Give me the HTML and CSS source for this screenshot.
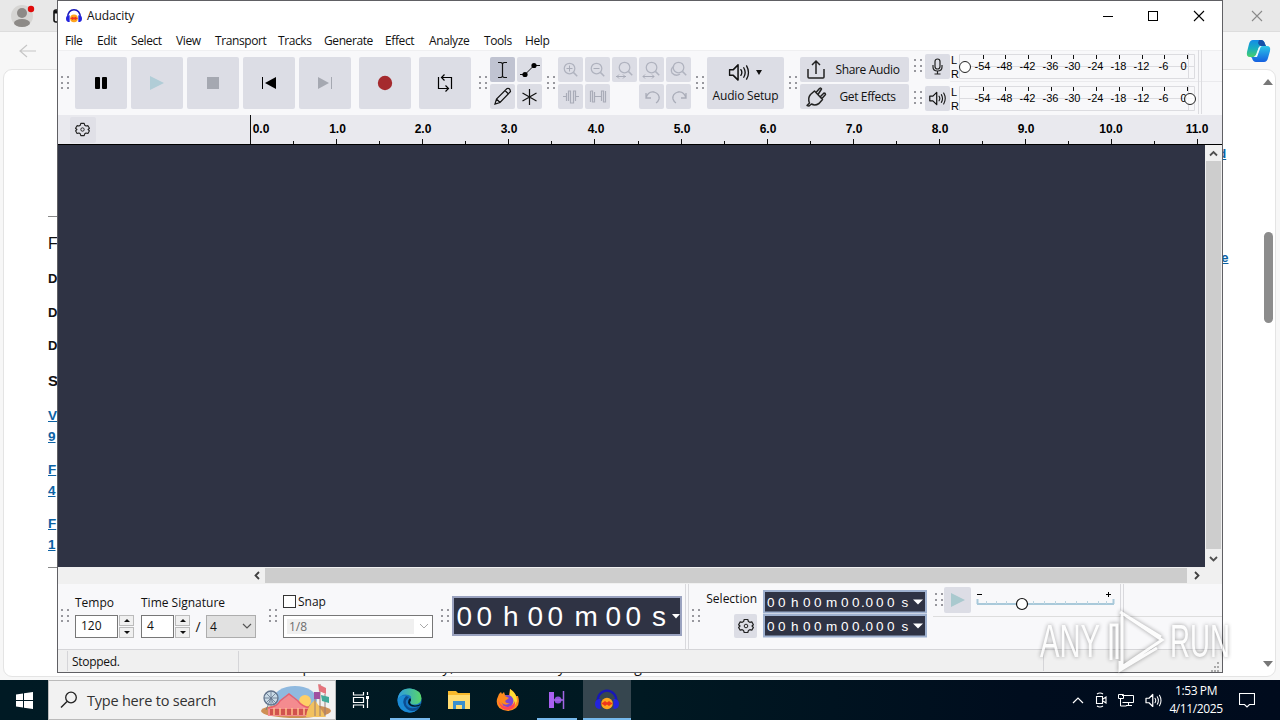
FILE: index.html
```html
<!DOCTYPE html>
<html lang="en">
<head>
<meta charset="utf-8">
<title>Audacity</title>
<link rel="stylesheet" href="styles.css">
</head>
<body>
<svg class="defs" width="0" height="0">
  <defs>
    <symbol id="grip" viewBox="0 0 8 14"><path d="M0 1h2M6 1h2M0 7h2M6 7h2M0 12h2M6 12h2" stroke="#98989e" stroke-width="2"/></symbol>
    <symbol id="gear" viewBox="0 0 16 16"><path d="M6.200 1.500h3.600l.6 2 1.400.8 2-.4 1.600 2.800L14 8l1.400 1.400-1.600 2.800-2-.5-1.400.9-.6 1.900H6.200l-.6-1.900-1.400-.9-2 .5L.6 9.400 2 8 .6 6.700l1.600-2.800 2 .4 1.400-.8z" fill="none" stroke="#222" stroke-width="1.200" stroke-linejoin="round"/><circle cx="8" cy="8" r="1.800" fill="none" stroke="#222"/></symbol>
    <symbol id="speaker" viewBox="0 0 22 20"><path d="M1 7h4l5-5v16l-5-5H1z" fill="none" stroke="currentColor" stroke-width="1.600" stroke-linejoin="round"/><path d="M13 7q2 3 0 6M16 5q3 5 0 10M19 3q4 7 0 14" fill="none" stroke="currentColor" stroke-width="1.400" stroke-linecap="round"/></symbol>
    <symbol id="aud" viewBox="0 0 24 22"><circle cx="12" cy="14.500" r="5.800" fill="#ffa51e"/><path d="M6 14.500l2-1 2-1.500 2 1.500 2-1.500 2 1.500 2 1-2 1-2 1.500-2-1.500-2 1.500-2-1.500z" fill="#f0351c"/><path d="M2.500 14C1.500-2.500 22.500-2.500 21.500 14" fill="none" stroke="#1717b8" stroke-width="2.400"/><path d="M5.500 10v10q-5.500 0-5.500-5t5.500-5M18.500 10v10q5.500 0 5.500-5t-5.500-5" fill="#2424dd"/></symbol>
    <symbol id="lens" viewBox="0 0 26 26"><circle cx="12" cy="12" r="5.500" fill="none" stroke="#b0b3bf" stroke-width="1.300"/><path d="M16 16l4 4" stroke="#b0b3bf" stroke-width="1.500"/></symbol>
  </defs>
</svg>

<div class="desktop">
<section class="browser">
  <div class="tabs">
    <svg class="avatar" width="34" height="30" viewBox="0 0 34 30"><circle cx="12" cy="15" r="11" fill="#d6d5d3"/><circle cx="12" cy="12" r="5" fill="#8d8a87"/><ellipse cx="12" cy="22" rx="8" ry="4" fill="#8d8a87"/><circle cx="21" cy="8" r="3.200" fill="#e00b0b"/></svg>
    <svg class="tabicon" width="16" height="14" viewBox="0 0 16 14"><rect x="1" y="1" width="14" height="12" rx="2" fill="none" stroke="#111" stroke-width="1.600"/><path d="M1 3h14" stroke="#111" stroke-width="3"/></svg>
    <svg class="bclose" width="12" height="12" viewBox="0 0 12 12"><path d="M1 1l10 10M11 1L1 11" stroke="#8a8a8a" stroke-width="1.100"/></svg>
  </div>
  <div class="nav">
    <svg width="18" height="14" viewBox="0 0 18 14"><path d="M8 1L1 7l7 6M1 7h16" fill="none" stroke="#c6c6c6" stroke-width="1.200"/></svg>
    <svg width="25" height="24" viewBox="0 0 25 24"><defs><linearGradient id="cpa" x1="0" y1="0" x2="0" y2="1"><stop offset="0" stop-color="#138be8"/><stop offset=".5" stop-color="#18aebf"/><stop offset="1" stop-color="#49d06a"/></linearGradient><linearGradient id="cpb" x1="0" y1="0" x2="0" y2="1"><stop offset="0" stop-color="#2bc6e8"/><stop offset="1" stop-color="#145fe0"/></linearGradient></defs><path d="M7 1h8q3 0 4 4l1 2h-5q-2 0-3 4l-1 4q-1 3-4 3H4q-4 0-3-5l2-8q1-4 4-4z" fill="url(#cpa)"/><path d="M13 1h2q3 0 4 4l1 2h-5q-2 0-3-3z" fill="#154fa8"/><path d="M18 23h-8q-3 0-4-4l-1-1h4q2 0 3-4l1-4q1-3 4-3h4q4 0 3 5l-2 7q-1 4-4 4z" fill="url(#cpb)"/><path d="M13 8l2-1-4 11-3 0q2-1 3-5z" fill="#e9fbff"/></svg>
  </div>
  <div class="page">
    <div class="left">
      <hr>
      <p class="h t1">F</p><p class="b t2">D</p><p class="b t3">D</p><p class="b t4">D</p><p class="h sb t5">S</p>
      <a class="t6">V</a><a class="t9">9</a><a class="t8">F</a><a class="t9">4</a><a class="t8">F</a><a class="t7">1</a>
      <hr class="hr2">
    </div>
    <div class="right"><a>d</a><a class="e">e</a></div>
    <div class="pscroll"><i class="up"></i><i class="thumb"></i><i class="down"></i></div>
  </div>
  <div class="cut">Other updates automatically, introduced any increasing and</div>
</section>

<main class="win">
  <header class="title">
    <svg width="16" height="16"><use href="#aud"/></svg><span>Audacity</span>
    <svg class="wc" width="102" height="12" viewBox="0 0 102 12"><path d="M0 6.500h10" stroke="#000"/><rect x="45.500" y="1.500" width="9" height="9" fill="none" stroke="#000"/><path d="M91 1l10 10M101 1L91 11" stroke="#000" stroke-width="1.100"/></svg>
  </header>
  <nav class="menu"><span style="width:18px">File</span><span style="width:20px">Edit</span><span style="width:31px">Select</span><span style="width:25px">View</span><span style="width:49px">Transport</span><span style="width:32px">Tracks</span><span style="width:47px">Generate</span><span style="width:30px">Effect</span><span style="width:41px">Analyze</span><span style="width:27px">Tools</span><span style="width:25px">Help</span></nav>

  <section class="bar">
    <svg class="grip"><use href="#grip"/></svg>
    <div class="transport">
      <button><svg viewBox="0 0 52 52"><rect x="20" y="20" width="5" height="12" rx="1"/><rect x="27" y="20" width="5" height="12" rx="1"/></svg></button>
      <button><svg viewBox="0 0 52 52"><path d="M19 19l14 7-14 7z" fill="#b1cdd7"/></svg></button>
      <button><svg viewBox="0 0 52 52"><rect x="20" y="20" width="12" height="12" fill="#a5a8b1"/></svg></button>
      <button><svg viewBox="0 0 52 52"><path d="M19.500 20v12" stroke="#000"/><path d="M33 20v12l-11-6z"/></svg></button>
      <button><svg viewBox="0 0 52 52"><path d="M32.500 20v12" stroke="#a5a8b1"/><path d="M19 20v12l11-6z" fill="#a5a8b1"/></svg></button>
      <button class="gap"><svg viewBox="0 0 52 52"><circle cx="26" cy="26" r="7.200" fill="#a52a2e"/></svg></button>
      <button class="gap"><svg viewBox="0 0 52 52"><path d="M19.500 20v11.500h9M26.500 28.500l3 3-3 3M32.500 32V20.500h-9M25.500 17.500l-3 3 3 3" fill="none" stroke="#000" stroke-width="1.200"/></svg></button>
    </div>
    <svg class="grip g2"><use href="#grip"/></svg>
    <div class="tiles two">
      <button class="on"><svg viewBox="0 0 25 25"><path d="M8 5.500h3l1.500 1 1.500-1h3M12.500 6v14M8 20.500h3l1.500-1 1.500 1h3" fill="none" stroke="#111" stroke-width="1.200"/></svg></button>
      <button><svg viewBox="0 0 25 25"><path d="M3 17.500h5l9-9h6" fill="none" stroke="#111"/><circle cx="8" cy="17.500" r="2.600"/><circle cx="17" cy="8.500" r="2.600"/></svg></button>
      <button><svg viewBox="0 0 25 25"><path d="M5 20l1.500-5L17 4.500q3-1 3.500 3L10 18.500zM15 6.500l3.500 3.500M6.500 15l3.500 3.500" fill="none" stroke="#111" stroke-width="1.200"/></svg></button>
      <button><svg viewBox="0 0 25 25"><path d="M12.500 5v16M5.500 9l14 8M19.500 9l-14 8" stroke="#111" stroke-width="1.200"/></svg></button>
    </div>
    <svg class="grip g3"><use href="#grip"/></svg>
    <div class="tiles five">
      <button><svg viewBox="0 0 25 25"><use href="#lens" width="25" height="25"/><path d="M8.500 11.500h6M11.500 8.500v6" stroke="#a9acb8"/></svg></button>
      <button><svg viewBox="0 0 25 25"><use href="#lens" width="25" height="25"/><path d="M8.500 11.500h6" stroke="#a9acb8"/></svg></button>
      <button><svg viewBox="0 0 25 25"><use href="#lens" x="1" y="-1" width="25" height="25"/><path d="M4 19.500h10M7 17.500l-2 2 2 2M11 17.500l2 2-2 2" fill="none" stroke="#a9acb8"/></svg></button>
      <button><svg viewBox="0 0 25 25"><use href="#lens" x="1" y="-1" width="25" height="25"/><path d="M4 19.500h11M6 17.500l-2 2 2 2M13 17.500l2 2-2 2" fill="none" stroke="#a9acb8"/></svg></button>
      <button><svg viewBox="0 0 25 25"><use href="#lens" x="1" y="-1" width="25" height="25"/><path d="M8 9q-4 3-2 7 4 4 8 1" fill="none" stroke="#b0b3bf" stroke-width="1.300"/></svg></button>
      <button><svg viewBox="0 0 25 25"><path d="M5 12.500h3M18 12.500h3M8.500 9v8M10.500 17V7h2v12h3V7h2v10" fill="none" stroke="#a9acb8" stroke-width="1.200"/></svg></button>
      <button><svg viewBox="0 0 25 25"><path d="M5.500 7v11M5.500 7h2v11h2V8M9.500 12.500h7M16.500 17V7h2v11h2V7" fill="none" stroke="#a9acb8" stroke-width="1.200"/></svg></button>
      <b></b>
      <button><svg viewBox="0 0 25 25"><path d="M7 9v5h5M7 14q2-7 8-6 6 2 5 7-1 3-3 4" fill="none" stroke="#a9acb8" stroke-width="1.300"/></svg></button>
      <button><svg viewBox="0 0 25 25"><path d="M20 9v5h-5M20 14q-2-7-8-6-6 2-5 7 1 3 3 4" fill="none" stroke="#a9acb8" stroke-width="1.300"/></svg></button>
    </div>
    <svg class="grip g4"><use href="#grip"/></svg>
    <button class="setup"><span class="row"><svg width="22" height="19" viewBox="0 0 22 20"><use href="#speaker"/></svg><i></i></span><span>Audio Setup</span></button>
    <svg class="grip g4"><use href="#grip"/></svg>
    <div class="share">
      <button><svg width="22" height="22" viewBox="0 0 22 22"><path d="M3 10v8q0 1 1 1h14q1 0 1-1v-8M11 15V3M7 6l4-4 4 4" fill="none" stroke="#222" stroke-width="1.500"/></svg><span>Share Audio</span></button>
      <button><svg width="22" height="22" viewBox="0 0 22 22"><path d="M2 19.500l2.500-2.500q-2-5 1-8.500l4-3.500 8 8.500-3.500 4q-4 2.500-7.500.5L4 20zM11 6.500l3.500-4q1.500-1 2 .5l-3.500 5.500M15 11l4-4q1.500 0 1.500 1.500l-4 4.500" fill="none" stroke="#222" stroke-width="1.500" stroke-linejoin="round"/></svg><span>Get Effects</span></button>
    </div>
    <div class="meters">
      <div class="meter"><svg class="grip"><use href="#grip"/></svg><button><svg viewBox="0 0 25 25"><rect x="10" y="5" width="5" height="10" rx="2.500" fill="none" stroke="#222" stroke-width="1.200"/><path d="M8 11v2q0 4 4.500 4t4.500-4v-2M12.500 17v3M9.500 20h6" fill="none" stroke="#222" stroke-width="1.200"/></svg></button>
        <svg class="scale" width="272" height="32" viewBox="0 0 272 32"><g fill="none" stroke="#dcdce0"><path d="M9.500 4.500h235v24h-235zM10 16.500h235M238.500 3v26M248.500 0v32M251.500 0v32M0 32h272"/></g><g class="ticks" stroke="#111"><path d="M33.500 5v4M55.500 5v4M78.500 5v4M101.500 5v4M123.500 5v4M146.500 5v4M169.500 5v4M192.500 5v4M214.500 5v4M237.500 5v4"/></g><g class="lab"><text x="1" y="14">L</text><text x="1" y="28">R</text><g class="n"><text x="32.500" y="20">-54</text><text x="54.500" y="20">-48</text><text x="77.500" y="20">-42</text><text x="100.500" y="20">-36</text><text x="122.500" y="20">-30</text><text x="145.500" y="20">-24</text><text x="168.500" y="20">-18</text><text x="191.500" y="20">-12</text><text x="213.500" y="20">-6</text><text x="233.500" y="20">0</text></g></g><circle cx="15" cy="17" r="5.500" fill="#fff" stroke="#222"/></svg></div>
      <div class="meter"><svg class="grip"><use href="#grip"/></svg><button><svg viewBox="0 0 25 25"><use href="#speaker" x="4" y="4" width="17" height="17"/></svg></button>
        <svg class="scale" width="272" height="32" viewBox="0 0 272 32"><g fill="none" stroke="#dcdce0"><path d="M9.500 4.500h235v24h-235zM10 16.500h235M238.500 3v26M248.500 0v32M251.500 0v32"/></g><g class="ticks" stroke="#111"><path d="M33.500 5v4M55.500 5v4M78.500 5v4M101.500 5v4M123.500 5v4M146.500 5v4M169.500 5v4M192.500 5v4M214.500 5v4M237.500 5v4"/></g><g class="lab"><text x="1" y="14">L</text><text x="1" y="28">R</text><g class="n"><text x="32.500" y="20">-54</text><text x="54.500" y="20">-48</text><text x="77.500" y="20">-42</text><text x="100.500" y="20">-36</text><text x="122.500" y="20">-30</text><text x="145.500" y="20">-24</text><text x="168.500" y="20">-18</text><text x="191.500" y="20">-12</text><text x="213.500" y="20">-6</text><text x="233.500" y="20">0</text></g></g><circle cx="240" cy="17" r="5.500" fill="#fff" fill-opacity=".8" stroke="#222"/></svg></div>
    </div>
  </section>

  <section class="ruler">
    <button><svg width="15" height="15"><use href="#gear"/></svg></button>
    <svg class="rul" width="972" height="29" viewBox="0 0 972 29"><path d="M.500 0v29M86.500 24v5M172.500 24v5M258.500 24v5M344.500 24v5M431.500 24v5M517.500 24v5M603.500 24v5M689.500 24v5M775.500 24v5M861.500 24v5M947.500 24v5M43.500 26v3M129.500 26v3M215.500 26v3M301.500 26v3M388.500 26v3M474.500 26v3M560.500 26v3M646.500 26v3M732.500 26v3M818.500 26v3M904.500 26v3" stroke="#111"/><g><text x="11" y="18">0.0</text><text x="87.500" y="18">1.0</text><text x="173" y="18">2.0</text><text x="259" y="18">3.0</text><text x="346" y="18">4.0</text><text x="432" y="18">5.0</text><text x="518" y="18">6.0</text><text x="604" y="18">7.0</text><text x="690" y="18">8.0</text><text x="776" y="18">9.0</text><text x="861" y="18">10.0</text><text x="947" y="18">11.0</text></g></svg>
  </section>

  <section class="tracks">
    <div class="canvas"></div>
    <div class="vs"><svg width="17" height="16" viewBox="0 0 17 16"><path d="M5 10.500l3.500-3.500L12 10.500" fill="none" stroke="#505050" stroke-width="1.800"/></svg><i></i><svg width="17" height="18" viewBox="0 0 17 18"><path d="M5 8l3.500 3.500L12 8" fill="none" stroke="#505050" stroke-width="1.800"/></svg></div>
  </section>
  <div class="hs"><svg width="16" height="17" viewBox="0 0 16 17"><path d="M10 5L6.500 8.500 10 12" fill="none" stroke="#404040" stroke-width="1.800"/></svg><i></i><svg width="18" height="17" viewBox="0 0 18 17"><path d="M8 5l3.500 3.500L8 12" fill="none" stroke="#404040" stroke-width="1.800"/></svg></div>

  <section class="lower">
    <svg class="grip"><use href="#grip"/></svg>
    <div class="sig">
      <div class="names"><span>Tempo</span><span>Time Signature</span></div>
      <div class="row"><span class="box b1">120</span><span class="spin"><i></i><i></i></span><span class="box b2">4</span><span class="spin"><i></i><i></i></span><em>/</em><span class="sel">4<svg width="10" height="7" viewBox="0 0 10 7"><path d="M1 1l4 4 4-4" fill="none" stroke="#555" stroke-width="1.200"/></svg></span></div>
    </div>
    <svg class="grip gs"><use href="#grip"/></svg>
    <div class="snap"><label><i></i>Snap</label><div class="combo"><span>1/8</span><svg width="10" height="7" viewBox="0 0 10 7"><path d="M1 1l4 4 4-4" fill="none" stroke="#aaa"/></svg></div></div>
    <svg class="grip gt"><use href="#grip"/></svg>
    <svg class="time" width="230" height="40" viewBox="0 0 230 40"><rect x="1" y="1" width="228" height="38" fill="#2f3344" stroke="#9aa2bf" stroke-width="2"/><text y="30" x="4.500 24.500 38 51 70 75.500 95.500 109 122.500 143 153.500 173.500 185 200">00 h 00 m 00 s</text><path d="M220 18h8l-4 4.500z" fill="#fff"/></svg>
    <div class="sep"></div>
    <svg class="grip gsel"><use href="#grip"/></svg>
    <div class="selname"><span>Selection</span><button><svg width="16" height="16"><use href="#gear"/></svg></button></div>
    <div class="fields">
      <svg width="164" height="24" viewBox="0 0 164 24"><rect x="1" y="1" width="162" height="21.500" fill="#2f3344" stroke="#9fb1cf" stroke-width="2"/><text y="17" x="4 15 23 28 35 40 51 59 63 73 78 89 98 102.500 113 124 133 138.500">00 h 00 m 00.000 s</text><path d="M150 9.500h10l-5 5z" fill="#fff"/></svg>
      <svg width="164" height="24" viewBox="0 0 164 24"><rect x="1" y="1" width="162" height="21.500" fill="#2f3344" stroke="#9fb1cf" stroke-width="2"/><text y="17" x="4 15 23 28 35 40 51 59 63 73 78 89 98 102.500 113 124 133 138.500">00 h 00 m 00.000 s</text><path d="M150 9.500h10l-5 5z" fill="#fff"/></svg>
    </div>
    <div class="pas"><svg class="grip"><use href="#grip"/></svg><button><svg viewBox="0 0 26 26"><path d="M6 6l14 7-14 7z" fill="#a9c9ce"/></svg></button>
      <svg class="slider" width="142" height="26" viewBox="0 0 142 26"><path d="M1 7.500h5M130 7.500h5M132.500 5v5" stroke="#000"/><path d="M1 17h137M1.500 12v5M137.500 12v5" stroke="#a9c9da" stroke-width="2"/><path d="M10.500 14v3M20.500 14v3M30.500 14v3M57.500 14v3M68.500 14v3M79.500 14v3M89.500 14v3M100.500 14v3M111.500 14v3M122.500 14v3M130.500 14v3" stroke="#bcd5e1"/><circle cx="46" cy="17" r="5.500" fill="#fff" stroke="#111" stroke-width="1.200"/></svg><div class="sep"></div></div>
  </section>
  <footer class="status"><i></i><span>Stopped.</span><b></b><svg width="10" height="10" viewBox="0 0 10 10"><path d="M6 1h2M3 5h2M6 5h2M0 9h2M3 9h2M6 9h2" stroke="#aaa" stroke-width="2"/></svg></footer>
</main>

<svg class="mark" width="220" height="80" viewBox="0 0 220 80"><text x="4" y="50" textLength="60" lengthAdjust="spacingAndGlyphs">ANY</text><text x="134" y="50" textLength="60" lengthAdjust="spacingAndGlyphs">RUN</text><path d="M75 53V18h6v34M86 6v54l40-27zM84 5l41 25M84 54v9l37-22" fill="none" stroke="#fff" stroke-width="3"/></svg>

<div class="taskbar">
  <div class="start"><svg width="17" height="17" viewBox="0 0 17 17"><path d="M0 2.500l7-1V8H0zM8 1.300L17 0v8H8zM0 9h7v6.500l-7-1zM8 9h9v8l-9-1.300z" fill="#fff"/></svg></div>
  <div class="search"><svg width="18" height="18" viewBox="0 0 18 18"><circle cx="11" cy="6.500" r="5.300" fill="none" stroke="#222" stroke-width="1.300"/><path d="M7 10.500L1 16.500" stroke="#222" stroke-width="1.400"/></svg><span>Type here to search</span>
    <svg class="fair" width="74" height="36" viewBox="0 0 74 36"><ellipse cx="35" cy="17" rx="22" ry="14" fill="#8fb9df"/><ellipse cx="36" cy="28" rx="35" ry="7" fill="#cf9055"/><circle cx="11" cy="15" r="7" fill="#c9dae6" stroke="#63748c" stroke-width="1.300"/><path d="M11 8v14M4 15h14M6 10l10 10M16 10L6 20M11 15l-5 12M11 15l5 12" stroke="#63748c" stroke-width=".8"/><circle cx="45" cy="18" r="6" fill="#ffcf66"/><path d="M8 25q9-1 12-7 6-2 9-7 3 5 9 7 4 6 13 7v8H8z" fill="#f48b8f"/><path d="M8 25q9-1 12-7l9-7 9 7q4 6 13 7" fill="none" stroke="#e95f6c" stroke-width="1.500"/><path d="M10 26h40v6H10z" fill="#d1524d"/><path d="M14 25v7M20 25v7M26 25v7M32 25v7M38 25v7M44 25v7" stroke="#ffc08c" stroke-width="1.500"/><path d="M46 34q1-11 9-17l11 17z" fill="#f2c15e"/><path d="M55 33V9M60 33V1M65 33V11" stroke="#987d77"/><path d="M54 9h6v7h-6z" fill="#a0509f"/><path d="M58 1l8 4v6l-7-3z" fill="#e5747c"/><path d="M61 12l8 2v6l-7-2z" fill="#41a998"/></svg></div>
  <div class="apps">
    <div><svg width="18" height="18" viewBox="0 0 18 18"><path d="M1.500 1v3h10V1M1.500 17v-3h10v3M1.500 6.500h10v5h-10zM15.500 1v3M15.500 8v9" fill="none" stroke="#fff" stroke-width="1.200"/><path d="M14 5h3v3h-3z" fill="#fff"/></svg></div>
    <div class="run"><svg width="25" height="25" viewBox="0 0 25 25"><defs><linearGradient id="ea"><stop offset="0" stop-color="#2d9be0"/><stop offset="1" stop-color="#59d66a"/></linearGradient></defs><circle cx="12.500" cy="12.500" r="12" fill="#1677c4"/><path d="M.5 12Q2 0 13 .5q11 1 11.500 10-.5 6-8 6-4 0-3-3 3-7-5-7-5 0-8 5.500z" fill="url(#ea)"/><path d="M9 8q-6 7 1 13 6 4 11 0-4 4-9 3.500Q1 23 .5 12 3 7 9 8z" fill="#1b8bd4"/><path d="M12 9q-6 5-1 10 5 3 12-1l-2 3q-6 4-11 0Q3 14 9 8z" fill="#0c4d91"/><path d="M13 10q2 2 0 4 0 3 5 3.500 4 0 6-2-1 3-4 3-8 1-9-4 0-3 2-4.500z" fill="#021a26"/></svg></div>
    <div><svg width="22" height="20" viewBox="0 0 22 20"><path d="M0 1h8l2 2h12v16H0z" fill="#f7b92c"/><path d="M0 5h22v14H0z" fill="#ffdc71"/><path d="M5 11h12v8h-3v-4H8v4H5z" fill="#3a8fcd"/></svg></div>
    <div><svg width="24" height="24" viewBox="0 0 24 24"><path d="M3 6l2-2 1 2 2-2 1 3h4l1-6q5 3 6 7l2 0q4 13-10 15Q-1 22 1 11z" fill="#ff8a1d"/><path d="M14 1q7 5 7 12-2 6-7 7 5-5 0-12z" fill="#ffdc35"/><circle cx="11.500" cy="13" r="6" fill="#7b45d4"/><path d="M2 12q3 7 9 7 6-1 8-6 1 8-7 9-8 0-10-10z" fill="#ff4458"/><path d="M4 8h5l4 2-4 3q1 3 5 2-5 4-9-1z" fill="#ff8a1d"/></svg></div>
    <div class="run"><svg width="16" height="18" viewBox="0 0 16 18"><path d="M0 1h5v16H0z" fill="#a960f2"/><circle cx="9" cy="9" r="3.500" fill="#8f50dd"/><path d="M14.500 0v18M4 9h11" stroke="#a166e4" stroke-width="1.500"/></svg></div>
    <div class="run cur"><svg width="24" height="22"><use href="#aud"/></svg></div>
  </div>
  <div class="tray">
    <svg width="12" height="8" viewBox="0 0 12 8"><path d="M1 7l5-5 5 5" fill="none" stroke="#fff" stroke-width="1.200"/></svg>
    <svg width="12" height="16" viewBox="0 0 12 16"><path d="M1.500 4.500h6v7h-6zM8 7l3-2v6L8 9M2 2q3-2 6 0M2 14q3 2 6 0" fill="none" stroke="#fff" stroke-width="1.100"/></svg>
    <svg width="16" height="14" viewBox="0 0 16 14"><path d="M4 2.500h11.500v7H4.500M8 12.500h6M10.500 10v3M.5 1.500h5v4h-5zM2.500 6v7h6" fill="none" stroke="#fff"/></svg>
    <svg width="17" height="15" color="#fff"><use href="#speaker"/></svg>
    <div class="clock"><span>1:53 PM</span><span>4/11/2025</span></div>
    <svg class="note" width="16" height="16" viewBox="0 0 16 16"><path d="M.500 1.500h15v11h-5L8 15l-2.500-2.500h-5z" fill="none" stroke="#fff" stroke-width="1.100"/></svg>
  </div>
</div>
</div>
</body>
</html>
```
FILE: styles.css
```css
* { box-sizing: border-box; }
body { margin: 0; font-family: "Open Sans", "Noto Sans", sans-serif; font-size: 12px; color: #111; }
button { border: 0; padding: 0; margin: 0; background: #dcdde5; border-radius: 2px; font: inherit; color: #111; display: flex; align-items: center; justify-content: center; }
button > svg, svg { display: block; flex: none; }
p, hr { margin: 0; }
.defs { position: absolute; }
.desktop { position: relative; width: 1280px; height: 720px; overflow: hidden; background: #f6f6f6; }
.row { display: flex; align-items: center; }
.grip { width: 8px; height: 14px; }

.browser { position: absolute; inset: 0 0 40px 0; background: #f7f7f7; }
.tabs { height: 32px; background: #e8e8e8; border-bottom: 1px solid #ddd; display: flex; align-items: center; padding: 0 17px 0 10px; }
.tabicon { margin-left: 9px; }
.bclose { margin-left: auto; }
.nav { height: 37px; display: flex; justify-content: space-between; align-items: center; padding: 0 9px 0 19px; }
.page { height: 608px; margin: 0 4px 0 3px; background: #fff; border: 1px solid #e4e4e4; border-radius: 9px; display: flex; }
.left { padding: 146px 0 0 44px; width: 61px; font-family: "DejaVu Sans", sans-serif; }
.left hr { border: 0; border-top: 1px solid #888; width: 40px; }
.left p, .left a { display: block; height: 20px; line-height: 20px; }
.left .h { font-size: 15px; }
.left .b, .left a, .left .sb, .right a { font-weight: bold; }
.left .h, .left .b { font-family: "Liberation Sans", sans-serif; font-weight: bold; }
.left .t1 { font-weight: normal; font-size: 16px; }
.left .b { font-size: 13px; }
.left a, .right a { font-family: "Liberation Sans", sans-serif; font-size: 13.5px; color: #0b62a4; text-decoration: underline; }
.t1 { margin-top: 17px; } .t2 { margin-top: 15px; } .t3 { margin-top: 14px; } .t4 { margin-top: 13px; } .t5 { margin-top: 15px; } .t6 { margin-top: 15px; }
.t7 { margin-top: 1px; } .t8 { margin-top: 13px; } .t9 { margin-top: 1px; }
.hr2 { margin-top: 12px; }
.right { margin-left: auto; width: 47px; padding-top: 74px; }
.right a { display: block; height: 20px; line-height: 20px; margin-left: 2px; }
.right .e { margin-top: 84px; margin-left: 5px; }
.pscroll { width: 12px; display: flex; flex-direction: column; align-items: center; padding: 9px 2px 9px 0; }
.up { border: 5px solid transparent; border-top: 0; border-bottom: 6px solid #777; }
.thumb { width: 9px; height: 91px; border-radius: 5px; background: #8c8c8c; margin-top: 147px; }
.down { border: 5px solid transparent; border-bottom: 0; border-top: 6px solid #777; margin-top: auto; }
.cut { position: absolute; left: 248px; top: 658px; font-size: 14px; line-height: 18px; letter-spacing: .6px; }

.win { position: absolute; left: 57px; top: 0; width: 1166px; height: 673px; border: 1px solid #606064; background: #f8f8fa; display: flex; flex-direction: column; }
.title { height: 29px; background: #fff; display: flex; align-items: center; padding: 0 17px 0 8px; flex: none; }
.title span { margin-left: 5px; font-size: 12px; letter-spacing: -.1px; }
.wc { margin-left: auto; }
.menu { height: 21px; background: #fff; border-bottom: 1px solid #efeff1; display: flex; gap: 14px; padding-left: 7px; line-height: 22px; font-size: 12px; letter-spacing: -.4px; white-space: nowrap; flex: none; }
.bar { height: 64px; display: flex; align-items: center; padding-left: 3px; flex: none; }
.transport { display: flex; gap: 4px; margin-left: 6px; }
.transport button { width: 52px; height: 52px; }
.transport svg { width: 52px; height: 52px; }
.transport .gap { margin-left: 4px; }
.g2, .g3, .g4 { margin: 0 4px 0 8px; }
.g3 { margin-left: 5px; margin-right: 3px; }
.g4 { margin-left: 5px; margin-right: 3px; }
.tiles { display: grid; gap: 2px; grid-auto-rows: 25px; }
.two { grid-template-columns: 25px 25px; margin-left: -1px; }
.five { grid-template-columns: repeat(5, 25px); }
.tiles svg, .meter button svg { width: 25px; height: 25px; }
.tiles .on { background: #c0c3d1; }
.setup { width: 77px; height: 52px; flex-direction: column; gap: 4px; letter-spacing: -.2px; }
.setup .row { margin-left: -1px; margin-bottom: 1px; }
.setup i { border: 3px solid transparent; border-top: 5px solid #111; border-bottom: 0; margin-left: 6px; }
.share { display: flex; flex-direction: column; gap: 2px; }
.share button { width: 109px; height: 25px; justify-content: flex-start; padding-left: 5px; letter-spacing: -.35px; }
.share span { flex: 1; text-align: center; padding-right: 1px; }
.meters { display: flex; flex-direction: column; margin-left: 5px; margin-top: -2px; height: 64px; flex: none; }
.meter { display: flex; align-items: center; height: 32px; }
.meter button { width: 25px; height: 25px; margin-left: 3px; }
.lab { font: 11px "Liberation Sans", sans-serif; }
.n { text-anchor: middle; }

.ruler { height: 30px; background: #e9e9ee; border-bottom: 1px solid #000; display: flex; align-items: center; padding-left: 12px; flex: none; }
.ruler button { width: 26px; height: 26px; background: #e0e0e7; }
.ruler button svg { margin-right: 1px; margin-bottom: 1px; }
.rul { margin-left: 154px; font: bold 12px "Liberation Sans", sans-serif; text-anchor: middle; }
.tracks { flex: 1; display: flex; }
.canvas { flex: 1; background: #2f3344; }
.vs { width: 17px; background: #f0f0f0; display: flex; flex-direction: column; }
.vs i { flex: 1; background: #cdcdcd; margin: 0 1px; }
.hs { height: 17px; display: flex; background: #f0f0f0; padding: 0 17px 0 191px; flex: none; }
.hs i { flex: 1; background: #cdcdcd; margin: 1px 0; }

.lower { height: 65px; display: flex; align-items: center; padding-left: 3px; flex: none; }
.lower > .grip { margin-top: -2px; }
.sig { width: 181px; margin-left: 6px; }
.names { display: flex; height: 20px; line-height: 16px; }
.names span:first-child { width: 66px; }
.box, .sel { border: 1px solid #777; background: #fff; height: 23px; line-height: 20px; padding-left: 5px; font-size: 12px; }
.b1 { width: 43px; } .b2 { width: 33px; margin-left: 7px; }
.spin { display: flex; flex-direction: column; gap: 1px; margin-left: 1px; }
.spin i { width: 15px; height: 11px; border: 1px solid #bbb; background: #f0f0f0; display: flex; align-items: center; justify-content: center; }
.spin i::after { content: ""; border: 3px solid transparent; border-bottom: 3px solid #111; border-top: 0; }
.spin i:last-child::after { border-top: 3px solid #111; border-bottom: 0; }
.sig em { width: 16px; text-align: center; font-style: normal; font-size: 14px; }
.sel { width: 50px; background: #e1e1e1; border-color: #adadad; display: flex; align-items: center; justify-content: space-between; padding: 0 3px; }
.lower > .gs { margin-left: 13px; }
.snap { margin-left: 6px; width: 150px; margin-top: -1px; }
.snap label { display: flex; align-items: center; height: 14px; margin-bottom: 7px; }
.snap label i { width: 13px; height: 13px; border: 1px solid #333; background: #fff; margin-right: 2px; }
.combo { height: 23px; border: 1px solid #777; background: #fff; display: flex; align-items: center; justify-content: space-between; padding: 3px 3px; color: #6d6d6d; }
.combo span { background: #f0f0f0; width: 127px; line-height: 15px; padding-left: 2px; }
.lower > .gt { margin-left: 8px; }
.time { margin-left: 3px; margin-top: -2px; }
.time text { font: 28px "Liberation Sans", sans-serif; fill: #fff; }
.sep { width: 4px; height: 65px; border-left: 1px solid #d9d9dd; border-right: 1px solid #d9d9dd; margin-left: 3px; flex: none; }
.lower > .gsel { margin-left: 3px; }
.selname { width: 51px; margin-left: 6px; margin-top: -6px; display: flex; flex-direction: column; align-items: flex-end; gap: 7px; margin-right: 6px; }
.selname span { line-height: 17px; }
.selname button { width: 23px; height: 24px; }
.fields { margin-top: -6px; }
.fields text { font: 13.5px "Liberation Sans", sans-serif; fill: #fff; }
.pas { flex: 1; height: 33px; align-self: flex-start; display: flex; align-items: center; border-bottom: 1px solid #ddd; margin-left: 6px; padding-left: 2px; }
.pas button { width: 27px; height: 26px; margin-left: 1px; }
.pas button svg { width: 26px; height: 26px; }
.slider { margin-left: 5px; }
.pas .sep { height: 33px; margin-left: 2px; }
.status { height: 23px; background: #f0f0f0; border-top: 1px solid #d5d5d8; display: flex; align-items: center; flex: none; }
.status i { width: 10px; height: 20px; border-right: 1px solid #d5d5d8; }
.status span { width: 171px; padding: 1px 0 0 4px; border-right: 1px solid #d5d5d8; line-height: 20px; letter-spacing: -.3px; }
.status b { width: 805px; height: 20px; border-right: 1px solid #d5d5d8; }
.status svg { margin-left: auto; margin-right: 1px; align-self: flex-end; }

.mark { position: absolute; left: 1036px; top: 607px; filter: drop-shadow(0 0 2px rgba(0,0,0,.5)); opacity: .75; }
.mark text { font: 46px "Liberation Sans", sans-serif; fill: #fff; }

.taskbar { position: absolute; left: 0; right: 0; bottom: 0; height: 40px; background: linear-gradient(90deg, #001a24 0, #001922 50%, #000d1e 80%, #000b1d); display: flex; }
.start { width: 48px; display: flex; align-items: center; justify-content: center; }
.search { width: 288px; background: #f2f2f2; border: 1px solid #bbb; display: flex; align-items: center; padding-left: 11px; }
.search span { font-size: 14.5px; letter-spacing: -.22px; margin-left: 9px; width: 170px; white-space: nowrap; color: #333; }
.search .fair { margin-left: 3px; margin-top: 2px; }
.apps { display: flex; padding-left: 1px; }
.apps > div { width: 47px; height: 40px; margin-right: 2px; display: flex; align-items: center; justify-content: center; }
.apps .run { background: linear-gradient(#76b9ed, #76b9ed) center bottom / 40px 2px no-repeat; }
.apps .cur { width: 48px; background-color: #36464f; background-size: 48px 2px; margin-left: 1px; }
.apps .cur svg { margin-right: 0; }
.tray { margin-left: auto; padding-right: 25px; display: flex; align-items: center; color: #fff; gap: 11px; }
.clock { width: 56px; display: flex; flex-direction: column; align-items: center; line-height: 18px; font-size: 12px; letter-spacing: -.4px; margin-left: -5px; }
.note { margin-left: 4px; }
```
